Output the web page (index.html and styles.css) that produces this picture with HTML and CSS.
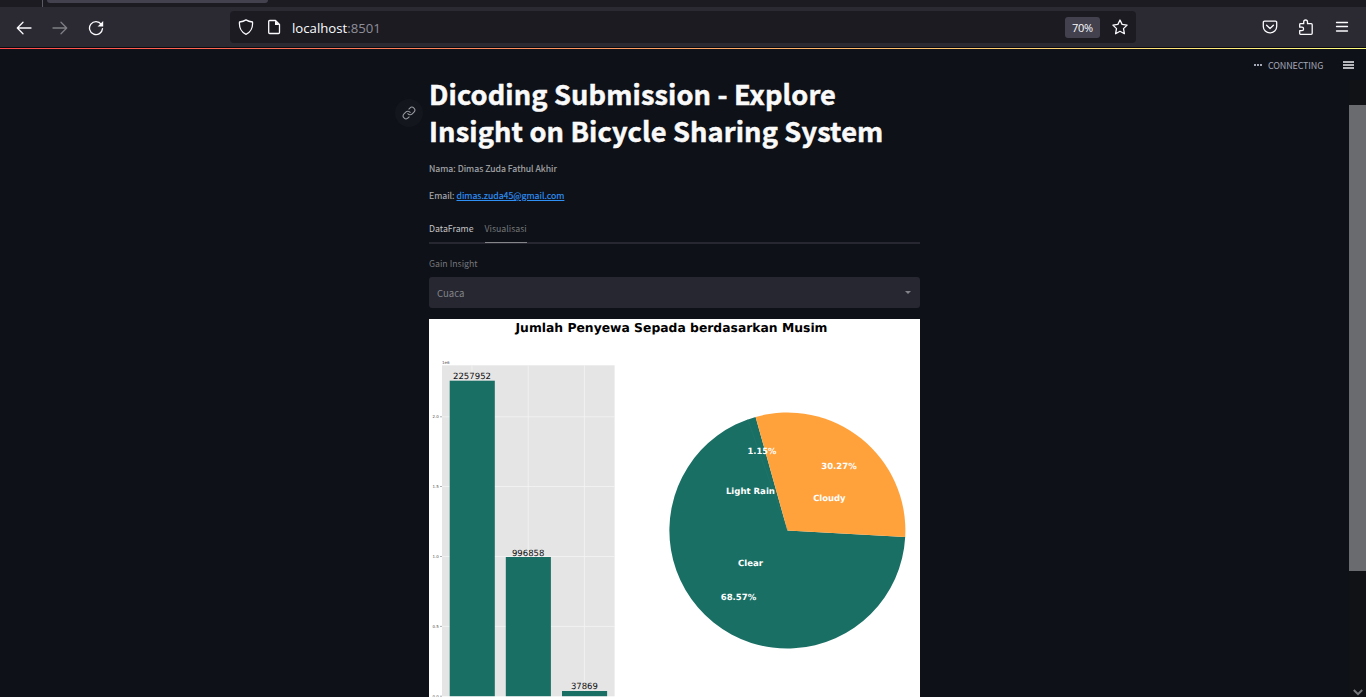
FILE: index.html
```html
<!DOCTYPE html>
<html lang="id">
<head>
<meta charset="utf-8">
<title>Bicycle Sharing</title>
<link rel="stylesheet" href="styles.css">
</head>
<body>
<div class="window">
  <div class="tabstrip"><i class="tab-divider"></i><i class="tab-active"></i></div>
  <nav class="toolbar">
    <div class="nav-buttons">
      <svg class="icon" viewBox="0 0 16 16"><path d="M15 8H1.5M7 2.3L1.3 8L7 13.7"/></svg>
      <svg class="icon dim" viewBox="0 0 16 16"><path d="M1 8h13.5M9 2.3L14.7 8L9 13.7"/></svg>
      <svg class="icon" viewBox="0 0 16 16"><path d="M13.3 4.300A6.500 6.500 0 1 0 14.500 8.600"/><path class="solid" d="M15.200 1v5.600H9.600z"/></svg>
    </div>
    <div class="urlbar">
      <svg class="icon shield" viewBox="0 0 16 16"><path d="M8 .9C6.300 2 4 2.700 1.500 3C1 8.500 3.500 13.500 8 15.300C12.500 13.500 15 8.500 14.500 3C12 2.700 9.700 2 8 .9z"/></svg>
      <svg class="icon page" viewBox="0 0 16 16"><path d="M3.700 1.500h5.800l4 4v8a1 1 0 0 1-1 1H3.700a1 1 0 0 1-1-1v-11a1 1 0 0 1 1-1z"/><path class="solid" d="M9 1.500v4.600h4.500z"/></svg>
      <span class="url">localhost<span class="port">:8501</span></span>
      <span class="zoom">70%</span>
      <svg class="icon star" viewBox="0 0 16 16"><path d="M8 1l2.100 4.400 5 .7-3.600 3.500.9 5.100L8 12.300l-4.400 2.400.9-5.100L.9 6.100l5-.7z"/></svg>
    </div>
    <div class="tools">
      <svg class="icon" viewBox="0 0 16 16"><path d="M2.500 2.200h11a1.200 1.200 0 0 1 1.200 1.200v4a6.700 6.500 0 0 1-13.400 0v-4a1.200 1.200 0 0 1 1.200-1.200zM4.600 6.200L8 9.500l3.400-3.300"/></svg>
      <svg class="icon" viewBox="0 0 16 16"><path d="M2.500 4.700h3.200V2.900a1.900 1.900 0 0 1 3.800 0v1.800h3.700a1 1 0 0 1 1 1v8.600a1 1 0 0 1-1 1H2.500a.8.8 0 0 1-.8-.8v-2.900h2.200a1.700 1.700 0 0 0 0-3.400H1.700V5.500a.8.8 0 0 1 .8-.8z"/></svg>
      <svg class="icon" viewBox="0 0 16 16"><path d="M2.500 3.500h11M2.500 7.500h11M2.500 12h11"/></svg>
    </div>
  </nav>
  <div class="viewport">
    <div class="decoration"></div>
    <div class="scroller">
      <main class="page-content">
        <div class="heading">
          <span class="anchor"><svg viewBox="0 0 24 24"><path d="M10 13a5 5 0 0 0 7.540.54l3-3a5 5 0 0 0-7.070-7.070l-1.720 1.710M14 11a5 5 0 0 0-7.540-.54l-3 3a5 5 0 0 0 7.070 7.070l1.710-1.710"/></svg></span>
          <h1>Dicoding Submission - Explore<br>Insight on Bicycle Sharing System</h1>
        </div>
        <p class="line">Nama: Dimas Zuda Fathul Akhir</p>
        <p class="line">Email: <a>dimas.zuda45@gmail.com</a></p>
        <div class="tabs"><span class="tab">DataFrame</span><span class="tab current">Visualisasi</span></div>
        <label class="field-label">Gain Insight</label>
        <div class="select"><span>Cuaca</span><i class="caret"></i></div>
        <svg class="chart" viewBox="429 319 491 378">
          <rect x="429" y="319" width="491" height="378" fill="#fff"/>
          <text class="chart-title" x="671.500" y="331.500" textLength="312" lengthAdjust="spacingAndGlyphs">Jumlah Penyewa Sepada berdasarkan Musim</text>
          <rect x="442" y="365.300" width="172.600" height="331" fill="#e5e5e5"/>
          <path class="grid" d="M442 416.800h172.600M442 486.500h172.600M442 556.500h172.600M442 626.400h172.600M472 365.300v331M528.200 365.300v331M584.400 365.300v331"/>
          <path class="ticks" d="M440 416.800h2M440 486.500h2M440 556.500h2M440 626.400h2M440 696.200h2"/>
          <g fill="#1a6f65">
            <rect x="449.700" y="380.700" width="45.100" height="315.500"/>
            <rect x="505.800" y="557" width="45.100" height="139.200"/>
            <rect x="562" y="691" width="45.100" height="5.200"/>
          </g>
          <g class="bar-label">
            <text x="472" y="379.200" textLength="38" lengthAdjust="spacingAndGlyphs">2257952</text>
            <text x="528.200" y="555.500" textLength="32.500" lengthAdjust="spacingAndGlyphs">996858</text>
            <text x="584.400" y="689.300" textLength="27" lengthAdjust="spacingAndGlyphs">37869</text>
          </g>
          <g class="tick-label">
            <text x="442" y="363.600" text-anchor="start" class="exponent">1e6</text>
            <text x="438.800" y="418.400">2.0</text><text x="438.800" y="488.100">1.5</text><text x="438.800" y="558.100">1.0</text><text x="438.800" y="628">0.5</text><text x="438.800" y="697.800">0.0</text>
          </g>
          <path d="M787.400 530.500L905.200 537A118 118 0 1 1 755.600 416.900z" fill="#1a6f65"/>
          <path d="M787.400 530.500L755.600 416.900A118 118 0 0 1 905.200 537z" fill="#ffa23c"/>
          <path d="M787.400 530.500L747.600 419.400" stroke="#28796f" stroke-width=".4"/>
          <g class="pie-label">
            <text x="762" y="454.400" textLength="29" lengthAdjust="spacingAndGlyphs">1.15%</text>
            <text x="839" y="468.600" textLength="35.500" lengthAdjust="spacingAndGlyphs">30.27%</text>
            <text x="750.400" y="493.700" textLength="49" lengthAdjust="spacingAndGlyphs">Light Rain</text>
            <text x="829.400" y="501" textLength="32.500" lengthAdjust="spacingAndGlyphs">Cloudy</text>
            <text x="750.500" y="566.400" textLength="25" lengthAdjust="spacingAndGlyphs">Clear</text>
            <text x="738.500" y="599.600" textLength="35.500" lengthAdjust="spacingAndGlyphs">68.57%</text>
          </g>
        </svg>
      </main>
      <aside class="rail">
        <div class="status"><span class="dots"><i></i><i></i><i></i></span><span class="status-text">CONNECTING</span><span class="menu"><i></i><i></i><i></i></span></div>
        <div class="scrollbar"><div class="thumb"></div><svg viewBox="0 0 10 7"><path d="M.8 1L5 5.200L9.200 1"/></svg></div>
      </aside>
    </div>
  </div>
</div>
</body>
</html>
```
FILE: styles.css
```css
* { box-sizing: border-box; }
body { margin: 0; background: #0e1117; overflow: hidden; }
.window { width: 1366px; height: 697px; display: flex; flex-direction: column; font-family: "Noto Sans CJK SC", "Noto Sans", sans-serif; }

.tabstrip { height: 7px; background: #1c1b22; display: flex; flex: none; }
.tab-divider { width: 1px; height: 7px; margin-left: 42px; background: #5b5b66; }
.tab-active { width: 221px; height: 3px; margin-left: 4px; background: #42414d; border-radius: 0 0 3px 3px; }

.toolbar { height: 40px; flex: none; background: #2b2a33; display: flex; align-items: center; padding: 0 16px; }
.icon { width: 16px; height: 16px; flex: none; fill: none; stroke: #fbfbfe; stroke-width: 1.3; stroke-linecap: round; stroke-linejoin: round; }
.icon .solid { fill: #fbfbfe; stroke: none; }
.dim { opacity: .4; }
.nav-buttons { display: flex; gap: 20px; width: 214px; padding-top: 2px; }
.urlbar { width: 906px; height: 32px; background: #1c1b22; border-radius: 4px; display: flex; align-items: center; padding: 0 8px; }
.page { margin-left: 12px; }
.url { flex: 1; margin-left: 10px; padding-top: 1px; font: 13.200px "Open Sans", sans-serif; color: #fbfbfe; }
.port { color: #8f8f99; }
.zoom { width: 35px; height: 21px; border-radius: 3px; background: #42414d; color: #fbfbfe; font: 11px/22px "Open Sans", sans-serif; letter-spacing: -.3px; text-align: center; margin-right: 12px; }
.tools { display: flex; gap: 20px; margin-left: auto; }

.viewport { flex: 1; min-height: 0; border-top: 1px solid #0c0c10; display: flex; flex-direction: column; }
.decoration { height: 1px; flex: none; background: linear-gradient(90deg, #ff4b4b, #fffd80); }
.scroller { flex: 1; min-height: 0; display: flex; justify-content: space-between; }

.page-content { width: 491px; margin-left: 429px; padding-top: 26px; }
.heading { position: relative; }
.anchor { position: absolute; left: -34px; top: 24px; width: 28px; height: 28px; border-radius: 50%; background: #13161d; display: flex; align-items: center; justify-content: center; }
.anchor svg { width: 14px; height: 14px; fill: none; stroke: #9a9ca1; stroke-width: 1.800; stroke-linecap: round; }
h1 { margin: 0; font-size: 27.200px; line-height: 37px; font-weight: 700; letter-spacing: .13px; color: #fafafa; -webkit-text-stroke: .5px #fafafa; white-space: nowrap; }
.line { margin: 0; height: 27px; font-size: 8.750px; line-height: 18px; color: #a8a9ac; -webkit-text-stroke: .15px; }
.heading + .line { margin-top: 11px; }
.line a { color: #2f91f5; text-decoration: underline; }
.tabs { height: 29px; display: flex; gap: 11px; border-bottom: 2px solid #262730; font-size: 8.750px; line-height: 27px; color: #c4c5c8; margin-top: 1px; }
.tab { height: 28px; }
.current { color: #75777b; border-bottom: 1px solid #85868a; }
.field-label { display: block; margin-top: 12px; height: 21px; font-size: 8.750px; line-height: 16px; color: #75777b; }
.select { height: 31px; border-radius: 3px; background: #262730; display: flex; align-items: center; justify-content: space-between; padding: 0 9px 0 8px; font-size: 9.600px; color: #83848a; }
.caret { border: 3px solid transparent; border-top-color: #83848a; border-bottom: 0; }
.chart { display: block; width: 491px; height: 378px; margin-top: 11px; font-family: "DejaVu Sans", sans-serif; text-anchor: middle; text-rendering: geometricPrecision; }
.chart-title { font-size: 12.300px; font-weight: 700; fill: #000; }
.grid { stroke: #f4f4f4; stroke-width: .8; fill: none; }
.ticks { stroke: #777; stroke-width: .6; }
.bar-label { font-size: 8.600px; fill: #111; }
.tick-label { font-size: 4px; fill: #555; text-anchor: end; }
.exponent { text-anchor: start; }
.pie-label { font-size: 8.500px; font-weight: 700; fill: #fff; }

.rail { display: flex; flex-direction: column; align-items: flex-end; }
.status { height: 31px; display: flex; align-items: center; padding: 1px 12px 0 0; color: #a3a8b8; font-size: 9px; }
.dots { display: flex; gap: 1px; margin-right: 6px; }
.dots i { width: 2px; height: 2px; background: #a3a8b4; }
.status-text { width: 55px; white-space: nowrap; letter-spacing: -.15px; }
.menu { display: grid; gap: 1px; margin-left: 20px; }
.menu i { width: 11px; height: 2px; background: #b6b7ba; }
.scrollbar { width: 17px; flex: 1; background: #111216; display: flex; flex-direction: column; align-items: center; padding: 25px 0 1px; }
.thumb { width: 17px; height: 466px; background: #6a6b6f; }
.scrollbar svg { width: 10px; height: 7px; margin-top: auto; fill: none; stroke: #77787c; stroke-width: 2; }
```
